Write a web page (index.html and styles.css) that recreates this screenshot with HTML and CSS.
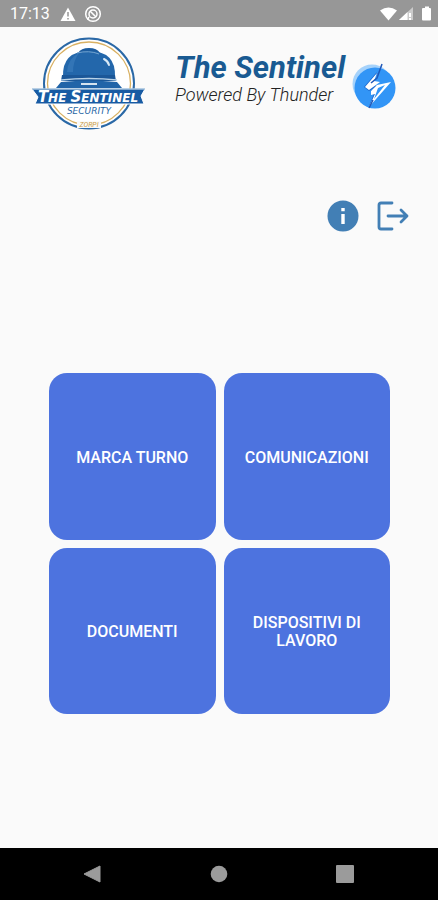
FILE: index.html
```
<!DOCTYPE html>
<html lang="it">
<head>
  <meta charset="utf-8">
  <meta name="viewport" content="width=device-width, initial-scale=1">
  <title>The Sentinel</title>
  <link rel="stylesheet" href="styles.css">
</head>
<body>
  <div class="status-bar">
    <span class="time">17:13</span>
    <svg class="status-icon" width="16" height="16" viewBox="0 0 16 16">
      <path d="M8 1.500L15.500 15H.5z" fill="#fff"/>
      <path d="M8 6v4.500M8 12v1.500" stroke="#979797" stroke-width="1.500"/>
    </svg>
    <svg class="status-icon" width="18" height="18" viewBox="0 0 18 18" fill="none" stroke="#fff">
      <circle cx="9" cy="9" r="7.300" stroke-width="1.500"/>
      <circle cx="9" cy="9" r="4" stroke-width="1.500"/>
      <path d="M6 6l6 6M5 12l-1.500 2.500" stroke-width="1.500"/>
    </svg>
    <svg class="signal" width="52" height="18" viewBox="0 0 52 18" fill="#fff">
      <path d="M0 5.500Q8.500-.5 17 5.500L8.500 15.500z"/>
      <path d="M33 2v13H19z" opacity=".5"/>
      <path d="M27.500 7v8H19z"/>
      <path d="M29 8h2v4h-2zM29 13h2v2h-2z"/>
      <path d="M43 3h2V1.500h4V3h1q1 0 1 1v10.500q0 1-1 1h-7q-1 0-1-1V4q0-1 1-1z"/>
    </svg>
  </div>

  <header class="header">
    <svg class="logo" width="130" height="105" viewBox="0 0 130 105" role="img" aria-label="The Sentinel Security">
      <circle cx="64" cy="53.500" r="45" fill="#fff" stroke="#2a68a6" stroke-width="2"/>
      <circle cx="64" cy="53.500" r="41.500" fill="none" stroke="#d9b163" stroke-width="1.300"/>
      <!-- helmet -->
      <path d="M53 23Q56 18 64 18t11 5z" fill="#1c5c9f"/>
      <path d="M38 47Q37 21 64 21t26 26z" fill="#2367ab"/>
      <path d="M42 42q1-14 12-19-6 8-6 19z" fill="#3375b6"/>
      <path d="M52 23q12-3 22 1" fill="none" stroke="#73a4d0" stroke-width="1"/>
      <path d="M79 29q4 2 5 6" fill="none" stroke="#d8e9f6" stroke-width="2" stroke-linecap="round"/>
      <path d="M37 45h53l1 6H36z" fill="#1b5798"/>
      <path d="M36 50q28-3 56 0" fill="none" stroke="#b9d3e8" stroke-width="1.300"/>
      <path d="M36 52q28-3 56 0l5 6H31z" fill="#2164a8"/>
      <path d="M56 53h16v2H56z" fill="#d5e3ef"/>
      <!-- ribbon -->
      <path d="M7 59h113l-4 7 3 8H10l3-7z" fill="#185ba3" stroke="#fff" stroke-width="1"/>
      <path d="M7 59h113" stroke="#77a4ce" stroke-width="1"/>
      <text class="logo-name" x="63" y="72" text-anchor="middle"><tspan class="logo-cap">T</tspan>HE <tspan class="logo-cap">S</tspan>ENTINEL</text>
      <path d="M40 76h48v10H40z" fill="#fff"/>
      <text class="logo-sub" x="64" y="84" text-anchor="middle">SECURITY</text>
      <path d="M52 91h24v7H52z" fill="#fafafa"/>
      <text class="logo-year" x="64" y="97" text-anchor="middle">ZORPI</text>
    </svg>
    <div class="titles">
      <h1 class="title">The Sentinel</h1>
      <p class="subtitle">Powered By Thunder</p>
    </div>
    <svg class="bolt" width="48" height="52" viewBox="0 0 48 52" role="img" aria-label="Thunder">
      <circle cx="21" cy="24" r="19.500" fill="#a5d2fb"/>
      <circle cx="24" cy="28" r="20.500" fill="#3295f6"/>
      <path d="M26 13L14 27l4 3 7-4M20 31l5-1-6 16" fill="none" stroke="#1f6bd0" stroke-width="1.500"/>
      <path d="M26 13L14 27l4 3 11-8-6-1z" fill="#fff"/>
      <path d="M20 31l6-6 14-3L18 47l6-13-4 1z" fill="#fff"/>
      <path d="M34 25l-7 3-4 11z" fill="#3295f6"/>
      <path d="M31 4l-5 14-6 5M22 40l-4 8" fill="none" stroke="#2058b8" stroke-width="1.500"/>
    </svg>
  </header>

  <main class="main">
    <div class="actions">
      <button class="icon-button" aria-label="Informazioni">
        <svg width="32" height="32" viewBox="0 0 32 32">
          <circle cx="16" cy="16" r="15.500" fill="#427fb5"/>
          <path d="M14.300 8h3.400v3.300h-3.400zM14.300 14h3.400v10h-3.400z" fill="#fff"/>
        </svg>
      </button>
      <button class="icon-button" aria-label="Esci">
        <svg width="32" height="32" viewBox="0 0 32 32" fill="none" stroke="#427fb5" stroke-width="2.800" stroke-linecap="round" stroke-linejoin="round">
          <path d="M15 3H4Q2 3 2 5v22q0 2 2 2h11"/>
          <path d="M11 16h19M24 10l6 6-6 6"/>
        </svg>
      </button>
    </div>

    <div class="tiles">
      <button class="tile">MARCA TURNO</button>
      <button class="tile">COMUNICAZIONI</button>
      <button class="tile">DOCUMENTI</button>
      <button class="tile">DISPOSITIVI DI LAVORO</button>
    </div>
  </main>

  <nav class="nav-bar">
    <button class="nav-button" aria-label="Indietro">
      <svg width="18" height="18" viewBox="0 0 18 18"><path d="M16 1v16L0 9z" fill="#9b9b9b" stroke="#9b9b9b" stroke-linejoin="round"/></svg>
    </button>
    <button class="nav-button" aria-label="Home">
      <svg width="18" height="18" viewBox="0 0 18 18"><circle cx="9" cy="9" r="8.300" fill="#9b9b9b"/></svg>
    </button>
    <button class="nav-button" aria-label="Recenti">
      <svg width="18" height="18" viewBox="0 0 18 18"><rect width="18" height="18" rx="1" fill="#9b9b9b"/></svg>
    </button>
  </nav>
</body>
</html>
```

FILE: styles.css
```
* {
  box-sizing: border-box;
}
body {
  margin: 0;
  min-height: 100vh;
  display: flex;
  flex-direction: column;
  font-family: Roboto, "Liberation Sans", sans-serif;
  background-color: #fafafa;
}
svg {
  display: block;
}
button {
  padding: 0;
  border: 0;
  background: none;
  font-family: inherit;
  cursor: pointer;
}
.status-bar {
  display: flex;
  align-items: center;
  height: 27px;
  padding: 0 6px 0 10px;
  gap: 8px;
  background-color: #979797;
}
.time {
  margin-right: 2px;
  font-size: 16px;
  color: #fff;
}
.signal {
  margin-left: auto;
}
.header {
  display: flex;
  align-items: flex-start;
  padding: 3px 24px 0 25px;
}
.titles {
  margin: 20px 0 0 20px;
  white-space: nowrap;
}
.title {
  margin: 0;
  font-size: 31px;
  line-height: 36px;
  font-weight: bold;
  font-style: italic;
  color: #195a92;
}
.subtitle {
  margin: 0;
  font-size: 18px;
  line-height: 18px;
  font-style: italic;
  font-weight: 300;
  color: #222;
}
.bolt {
  margin: 30px 0 0 6px;
}
.logo-name {
  font-family: "DejaVu Sans", sans-serif;
  font-size: 12px;
  font-weight: bold;
  font-style: italic;
  fill: #fff;
}
.logo-cap {
  font-size: 15px;
}
.logo-sub {
  font-family: "DejaVu Sans", sans-serif;
  font-size: 9px;
  font-style: italic;
  fill: #2a68a6;
}
.logo-year {
  font-size: 7px;
  font-style: italic;
  fill: #c99a3f;
}
.main {
  flex: 1;
}
.actions {
  display: flex;
  justify-content: flex-end;
  gap: 18px;
  padding: 65px 29px 0;
}
.tiles {
  display: grid;
  grid-template-columns: 1fr 1fr;
  gap: 8px;
  padding: 141px 48px 32px 49px;
}
.tile {
  aspect-ratio: 1;
  min-width: 0;
  padding: 3px 16px 0;
  border-radius: 18px;
  background-color: #4d73df;
  color: #fff;
  font-size: 16px;
  line-height: 18px;
  font-weight: 500;
}
.nav-bar {
  display: flex;
  justify-content: center;
  align-items: center;
  gap: 108px;
  height: 52px;
  background-color: #000;
}
```
